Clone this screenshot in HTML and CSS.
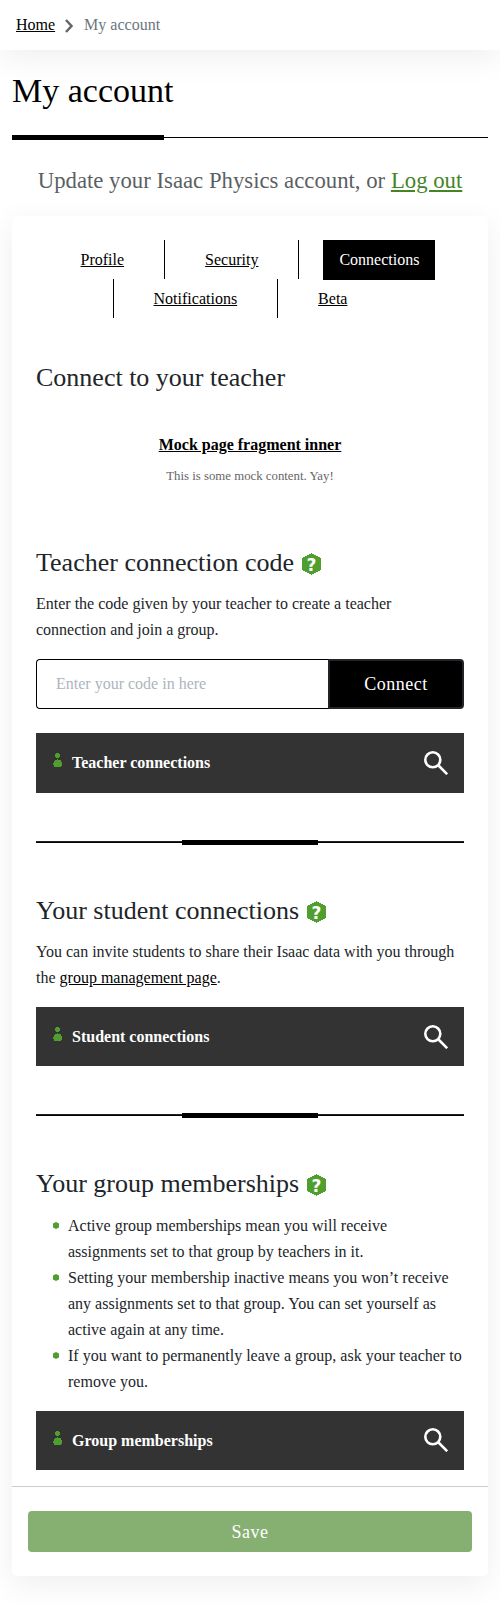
FILE: index.html
```html
<!DOCTYPE html>
<html lang="en">
<head>
<meta charset="utf-8">
<title>My account</title>
<link rel="stylesheet" href="styles.css">
</head>
<body>
<svg class="defs" width="0" height="0">
  <symbol id="hexagon" viewBox="0 0 19 22">
    <path shape-rendering="crispEdges" fill="#509e2e" d="M9.5 0 19 5.3V16.7L9.5 22 0 16.7V5.3Z"/>
  </symbol>
  <symbol id="person" viewBox="0 0 9 14">
    <path shape-rendering="crispEdges" fill="#509e2e" d="M3 0H6L7 1.5V3.5L6 5H3L2 3.5V1.5ZM4 6H5V7H7L8 8V9L9 10V12L8 13V14H1V13L0 12V10L1 9V8L2 7H4Z"/>
  </symbol>
  <symbol id="search" viewBox="0 0 24 24">
    <circle cx="8.8" cy="8.8" r="7.5" fill="none" stroke="#fff" stroke-width="2.6"/>
    <path d="M14 14 23.2 23.2" stroke="#fff" stroke-width="2.6"/>
  </symbol>
</svg>
<nav class="breadcrumb">
  <a href="#">Home</a>
  <svg class="chevron" width="8" height="14" viewBox="0 0 8 14"><path d="M1 1 6.5 7 1 13" fill="none" stroke="#666" stroke-width="2.5"/></svg>
  <span>My account</span>
</nav>
<main>
  <h1>My account</h1>
  <div class="title-rule"></div>
  <p class="lead">Update your Isaac Physics account, or <a href="#">Log out</a></p>
  <section class="card">
    <ul class="tabs">
      <li><a href="#">Profile</a></li>
      <li><a href="#">Security</a></li>
      <li><a class="active" href="#">Connections</a></li>
      <li><a href="#">Notifications</a></li>
      <li><a href="#">Beta</a></li>
    </ul>
    <div class="content">
      <h3>Connect to your teacher</h3>
      <div class="fragment">
        <a href="#">Mock page fragment inner</a>
        <p>This is some mock content. Yay!</p>
      </div>
      <h3>Teacher connection code <svg class="help" width="19" height="22"><use href="#hexagon"/><text class="help-mark" x="9.5" y="18" text-anchor="middle">?</text></svg></h3>
      <p class="text">Enter the code given by your teacher to create a teacher connection and join a group.</p>
      <div class="code-entry">
        <input type="text" placeholder="Enter your code in here">
        <button>Connect</button>
      </div>
      <div class="bar bar-tall">
        <svg class="person" width="9" height="14"><use href="#person"/></svg>
        <b>Teacher connections</b>
        <svg class="search" width="24" height="24"><use href="#search"/></svg>
      </div>
      <div class="section-rule"></div>
      <h3>Your student connections <svg class="help" width="19" height="22"><use href="#hexagon"/><text class="help-mark" x="9.5" y="18" text-anchor="middle">?</text></svg></h3>
      <p class="text">You can invite students to share their Isaac data with you through the <a href="#">group management page</a>.</p>
      <div class="bar">
        <svg class="person" width="9" height="14"><use href="#person"/></svg>
        <b>Student connections</b>
        <svg class="search" width="24" height="24"><use href="#search"/></svg>
      </div>
      <div class="section-rule"></div>
      <h3>Your group memberships <svg class="help" width="19" height="22"><use href="#hexagon"/><text class="help-mark" x="9.5" y="18" text-anchor="middle">?</text></svg></h3>
      <ul class="notes">
        <li>Active group memberships mean you will receive assignments set to that group by teachers in it.</li>
        <li>Setting your membership inactive means you won’t receive any assignments set to that group. You can set yourself as active again at any time.</li>
        <li>If you want to permanently leave a group, ask your teacher to remove you.</li>
      </ul>
      <div class="bar bar-last">
        <svg class="person" width="9" height="14"><use href="#person"/></svg>
        <b>Group memberships</b>
        <svg class="search" width="24" height="24"><use href="#search"/></svg>
      </div>
    </div>
    <footer><button>Save</button></footer>
  </section>
</main>
</body>
</html>
```

FILE: styles.css
```css
* { box-sizing: border-box; }
body {
  margin: 0;
  background: #fff;
  color: #212529;
  font: 16px/26px "Liberation Serif", serif;
}
h1, h3, p, ul { margin: 0; padding: 0; font-weight: 400; }
ul { list-style: none; }
a { color: #000; text-decoration: underline; }
button, input { font-family: inherit; margin: 0; }
.defs { display: block; }

.breadcrumb {
  height: 50px;
  padding: 0 16px;
  display: flex;
  align-items: center;
  box-shadow: 0 8px 32px rgba(0, 0, 0, .065);
  color: #6c757d;
}
.chevron { margin: 1px 11px 0 10px; }

main { padding: 0 12px 48px; }
h1 {
  padding-top: 21px;
  color: #000;
  font-size: 34px;
  line-height: 40px;
}
.title-rule {
  height: 5px;
  margin-top: 24px;
  background:
    linear-gradient(#000, #000) 0 0 / 152px 5px no-repeat,
    linear-gradient(#000, #000) 0 2px / 100% 1px no-repeat;
}
.lead {
  margin-top: 24px;
  height: 52px;
  color: #5b5f63;
  font-size: 22.75px;
  line-height: 34px;
  text-align: center;
  white-space: nowrap;
}
.lead a { color: #448525; }

.card {
  height: 1360px;
  padding-top: 24px;
  border-radius: 5px;
  background: #fff;
  box-shadow: 0 8px 32px rgba(0, 0, 0, .07);
}
.tabs { display: flex; flex-wrap: wrap; justify-content: center; padding: 0 16px; }
.tabs li { height: 39px; padding: 0 24px; }
.tabs li + li { border-left: 1px solid #000; }
.tabs a { display: block; height: 40px; padding: 7px 16px; }
.tabs .active { background: #000; color: #fff; text-decoration: none; }

.content { padding: 43px 24px 16px; }
h3 { height: 34px; font-size: 26px; line-height: 34px; white-space: nowrap; }
.help { margin-left: 1px; vertical-align: -4px; }
.help-mark { font: bold 17px "DejaVu Sans", sans-serif; fill: #fff; }
.fragment { height: 151px; padding-top: 37px; text-align: center; }
.fragment a { display: block; font-weight: 700; }
.fragment p { margin-top: 8px; color: #666; font-size: 12.8px; line-height: 20px; }
.text { margin-top: 11px; }

.code-entry { display: flex; height: 50px; margin: 16px 0 24px; }
.code-entry input {
  flex: 1;
  min-width: 0;
  padding: 0 19px;
  border: 1px solid #000;
  border-right: 0;
  border-radius: 4px 0 0 4px;
  font-size: 16px;
}
.code-entry input::placeholder { color: #adb5bd; opacity: 1; }
.code-entry button {
  width: 136px;
  border: 2px solid #212529;
  border-radius: 0 4px 4px 0;
  background: #000;
  color: #fff;
  font-size: 18px;
  letter-spacing: .5px;
}

.bar {
  display: flex;
  align-items: center;
  height: 59px;
  margin-top: 16px;
  padding: 0 16px 0 17px;
  background: #333;
  color: #fff;
}
.bar-tall { height: 60px; }
.person { margin: -5px 10px 0 0; }
.bar-tall .person { margin-top: -6px; }
.search { margin-left: auto; }
.bar-last .search { margin-top: -1px; }
.section-rule {
  height: 5px;
  margin: 47px 0 49px;
  background:
    linear-gradient(#000, #000) center 0 / 136px 5px no-repeat,
    linear-gradient(#222, #222) 0 1px / 100% 1px no-repeat,
    linear-gradient(#000, #000) 0 2px / 100% 1px no-repeat;
}
.notes { margin-top: 12px; }
.notes li { display: flex; padding-left: 17px; }
.notes li::before {
  content: "";
  flex: none;
  width: 6px;
  height: 7px;
  margin: 9px 9px 0 0;
  background: #509e2e;
  clip-path: polygon(50% 0, 100% 22%, 100% 78%, 50% 100%, 0 78%, 0 22%);
}

footer { padding: 24px 16px; border-top: 1px solid #ccc; }
footer button {
  display: block;
  width: 100%;
  height: 41px;
  padding-top: 3px;
  border: 0;
  border-radius: 4px;
  background: #86af72;
  color: #fff;
  font-size: 18px;
  letter-spacing: .5px;
}
```
